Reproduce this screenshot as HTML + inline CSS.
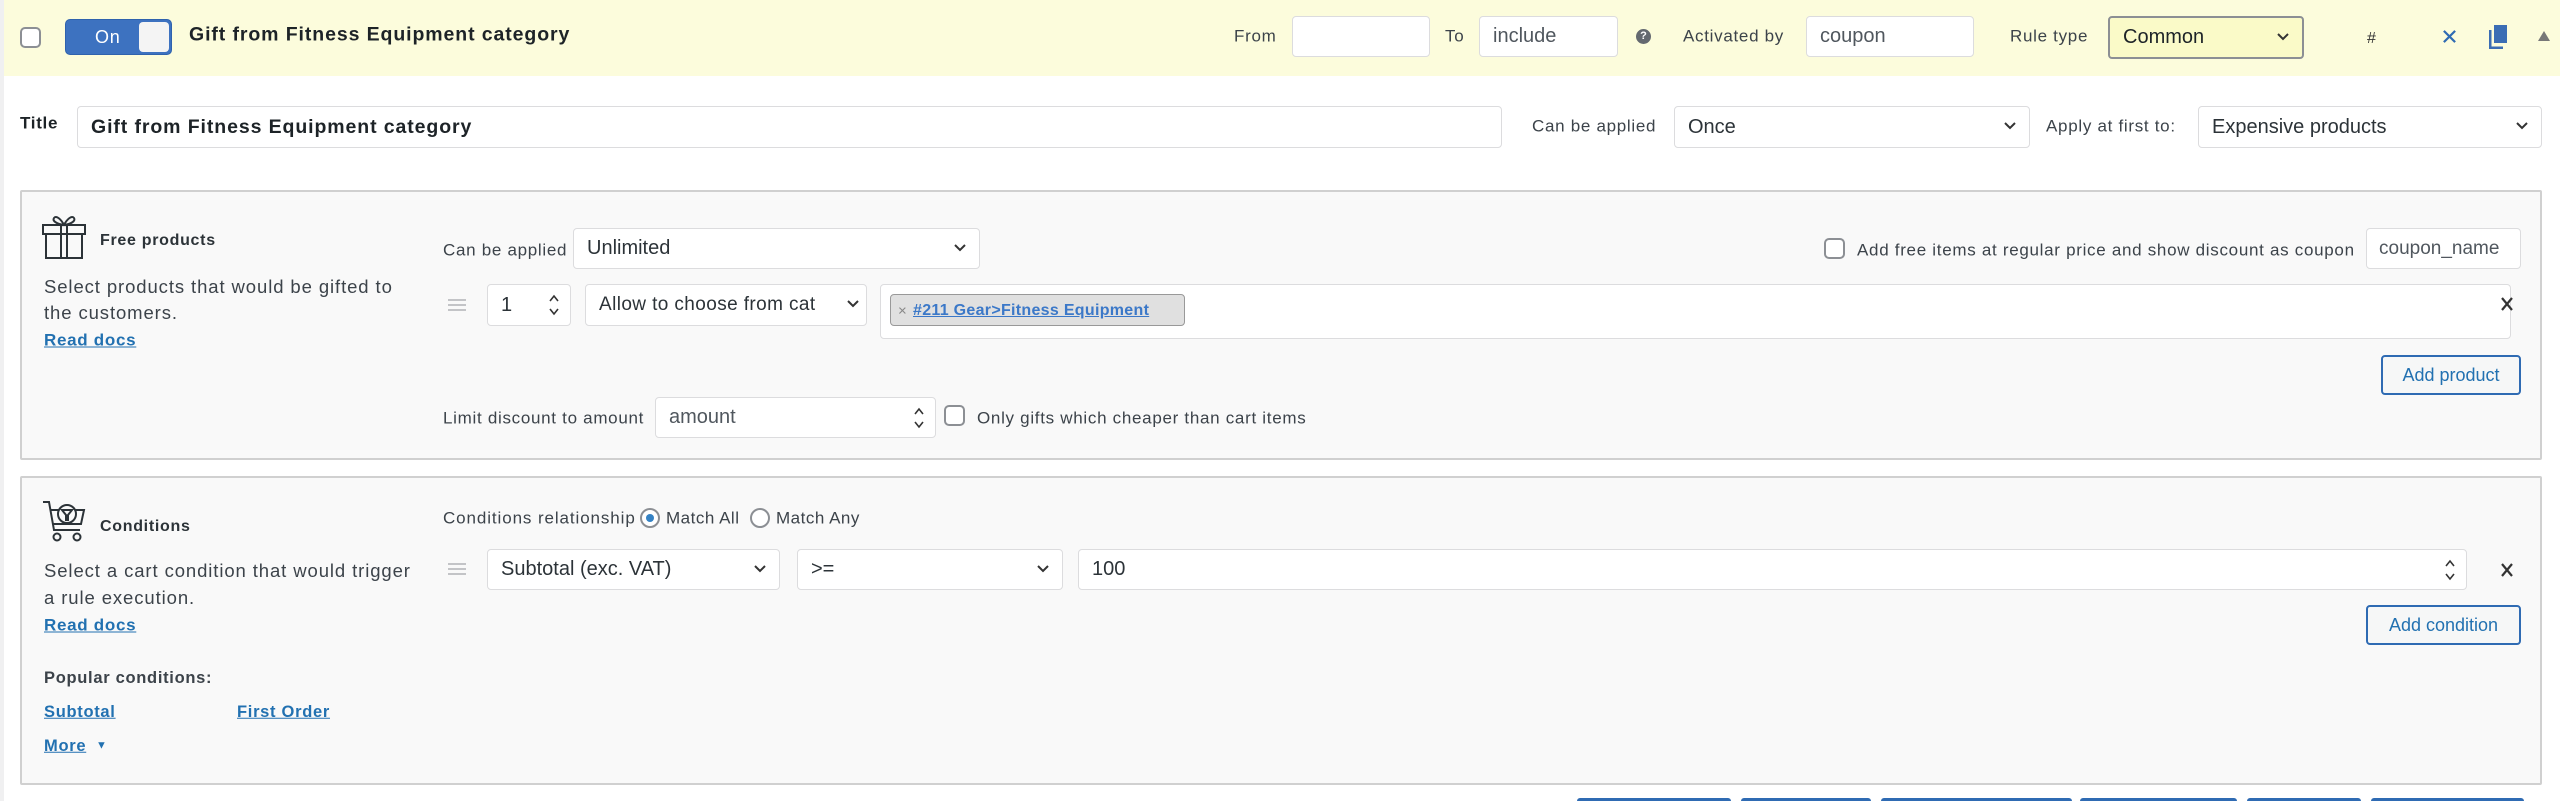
<!DOCTYPE html>
<html><head><meta charset="utf-8"><style>
*{margin:0;padding:0;box-sizing:border-box}
body{width:2560px;height:801px;overflow:hidden;background:#fff;font-family:"Liberation Sans",Arial,sans-serif;color:#3c434a;position:relative}
.a{position:absolute}
.t{position:absolute;white-space:nowrap;font-size:17px;color:#3c434a;transform:translateY(-50%);line-height:1;letter-spacing:0.7px}
.in{position:absolute;background:#fff;border:1px solid #dcdcde;border-radius:4px;display:flex;align-items:center;padding-left:13px;font-size:20px;color:#2c3338;white-space:nowrap;overflow:hidden}
.chev{position:absolute;right:12px;top:50%;margin-top:-6px;width:14px;height:10px}
.lnk{color:#2271b1;text-decoration:underline;font-weight:bold;font-size:17px}
.btn{position:absolute;border:2px solid #2f6bb3;border-radius:4px;background:#f6f7f7;color:#2271b1;font-size:18px;display:flex;align-items:center;justify-content:center}
.panel{position:absolute;left:20px;width:2522px;background:#f9f9f9;border:2px solid #d0d0d0;border-radius:2px}
.cb{position:absolute;width:21px;height:21px;border:2px solid #8c8f94;border-radius:5px;background:#fff}
.drag{position:absolute;width:18px;height:12px;border-top:2px solid #c3c4c7;border-bottom:2px solid #c3c4c7}
.drag:after{content:"";position:absolute;left:0;right:0;top:3px;border-top:2px solid #c3c4c7}
.spin{position:absolute;right:10px;top:50%;transform:translateY(-50%);width:12px;height:26px}
.desc{font-size:18.5px;letter-spacing:0.9px}
</style></head><body>
<div class="a" style="left:0;top:0;width:4px;height:801px;background:#f0f0f1"></div>
<!-- header -->
<div class="a" style="left:4px;top:0;width:2556px;height:76px;background:#fcfcdc"></div>
<div class="cb" style="left:20px;top:27px"></div>
<div class="a" style="left:65px;top:19px;width:107px;height:36px;background:#3d72c0;border-radius:5px;border:1px solid #2f62ad"></div>
<div class="t" style="left:95px;top:37px;color:#fff;font-size:18px">On</div>
<div class="a" style="left:139px;top:22px;width:30px;height:30px;background:#f4f4f4;border-radius:4px"></div>
<div class="t" style="left:189px;top:35px;font-size:19.5px;font-weight:bold;color:#1d2327;letter-spacing:0.9px">Gift from Fitness Equipment category</div>
<div class="t" style="left:1234px;top:36px">From</div>
<div class="in" style="left:1292px;top:16px;width:138px;height:41px"></div>
<div class="t" style="left:1445px;top:36px">To</div>
<div class="in" style="left:1479px;top:16px;width:139px;height:41px;color:#50575e">include</div>
<div class="a" style="left:1636px;top:29px;width:15px;height:15px;border-radius:50%;background:#646970;color:#fff;font-size:11px;font-weight:bold;text-align:center;line-height:15px">?</div>
<div class="t" style="left:1683px;top:36px">Activated by</div>
<div class="in" style="left:1806px;top:16px;width:168px;height:41px;color:#50575e">coupon</div>
<div class="t" style="left:2010px;top:36px">Rule type</div>
<div class="in" style="left:2108px;top:16px;width:196px;height:43px;background:#fafac8;border:2px solid #8c8f94;color:#1d2327">Common<svg class="chev" viewBox="0 0 14 10"><path d="M2 2l5 5 5-5" stroke="#333" stroke-width="2" fill="none"/></svg></div>
<div class="t" style="left:2367px;top:39px;font-size:16px;color:#333">#</div>
<svg class="a" style="left:2442px;top:29px" width="15" height="15" viewBox="0 0 16 16"><path d="M2 2L14 14M14 2L2 14" stroke="#2f6bb3" stroke-width="2.4"/></svg>
<svg class="a" style="left:2489px;top:25px" width="20" height="24" viewBox="0 0 20 24"><rect x="5" y="0" width="13" height="18" fill="#3b6db4"/><path d="M1 5v18h13" stroke="#3b6db4" stroke-width="3" fill="none"/></svg>
<svg class="a" style="left:2538px;top:31px" width="12" height="10" viewBox="0 0 12 10"><path d="M6 0L12 10H0z" fill="#777"/></svg>
<!-- title row -->
<div class="t" style="left:20px;top:123px;font-weight:bold;color:#1d2327">Title</div>
<div class="in" style="left:77px;top:106px;width:1425px;height:42px;font-weight:bold;font-size:19.5px;color:#1d2327;letter-spacing:0.9px">Gift from Fitness Equipment category</div>
<div class="t" style="left:1532px;top:126px">Can be applied</div>
<div class="in" style="left:1674px;top:106px;width:356px;height:42px">Once<svg class="chev" viewBox="0 0 14 10"><path d="M2 2l5 5 5-5" stroke="#333" stroke-width="2" fill="none"/></svg></div>
<div class="t" style="left:2046px;top:126px">Apply at first to:</div>
<div class="in" style="left:2198px;top:106px;width:344px;height:42px">Expensive products<svg class="chev" viewBox="0 0 14 10"><path d="M2 2l5 5 5-5" stroke="#333" stroke-width="2" fill="none"/></svg></div>
<!-- free products panel -->
<div class="panel" style="top:190px;height:270px"></div>
<svg class="a" style="left:42px;top:213px" width="44" height="46" viewBox="0 0 44 46"><g stroke="#2c3338" stroke-width="2" fill="none"><rect x="1" y="12" width="42" height="9"/><rect x="4" y="21" width="36" height="24"/><path d="M19 12v33M25 12v33"/><path d="M22 12c-3-6-8-10-10-7s3 6 10 7zM22 12c3-6 8-10 10-7s-3 6-10 7z"/></g></svg>
<div class="t" style="left:100px;top:241px;font-weight:bold;font-size:16px;color:#2c3338">Free products</div>
<div class="t desc" style="left:44px;top:287px">Select products that would be gifted to</div>
<div class="t desc" style="left:44px;top:313px">the customers.</div>
<div class="t lnk" style="left:44px;top:340px">Read docs</div>
<div class="t" style="left:443px;top:250px">Can be applied</div>
<div class="in" style="left:573px;top:228px;width:407px;height:41px">Unlimited<svg class="chev" viewBox="0 0 14 10"><path d="M2 2l5 5 5-5" stroke="#333" stroke-width="2" fill="none"/></svg></div>
<div class="cb" style="left:1824px;top:238px"></div>
<div class="t" style="left:1857px;top:250px">Add free items at regular price and show discount as coupon</div>
<div class="in" style="left:2366px;top:228px;width:155px;height:41px;color:#50575e;font-size:19px;padding-left:12px">coupon_name</div>
<div class="drag" style="left:448px;top:299px"></div>
<div class="in" style="left:487px;top:284px;width:84px;height:42px">1<svg class="spin" viewBox="0 0 12 26"><path d="M2 9l4-5 4 5M2 17l4 5 4-5" stroke="#333" stroke-width="1.6" fill="none"/></svg></div>
<div class="in" style="left:585px;top:284px;width:282px;height:42px;font-size:19px;letter-spacing:0.4px">Allow to choose from cat<svg class="chev" style="right:6px" viewBox="0 0 14 10"><path d="M2 2l5 5 5-5" stroke="#333" stroke-width="2" fill="none"/></svg></div>
<div class="in" style="left:880px;top:284px;width:1631px;height:55px"></div>
<div class="a" style="left:890px;top:294px;width:295px;height:32px;background:#e0e0e0;border:1px solid #999;border-radius:4px"></div>
<div class="t" style="left:898px;top:311px;color:#888;font-size:15px">×</div>
<div class="t lnk" style="left:913px;top:311px;font-size:16px;color:#3b78c8;letter-spacing:0.3px">#211 Gear&gt;Fitness Equipment</div>
<svg class="a" style="left:2500px;top:296px" width="14" height="16" viewBox="0 0 14 16"><path d="M2 2L12 14M12 2L2 14" stroke="#333" stroke-width="2.2"/></svg>
<div class="btn" style="left:2381px;top:355px;width:140px;height:40px">Add product</div>
<div class="t" style="left:443px;top:418px">Limit discount to amount</div>
<div class="in" style="left:655px;top:397px;width:281px;height:41px;color:#50575e">amount<svg class="spin" viewBox="0 0 12 26"><path d="M2 9l4-5 4 5M2 17l4 5 4-5" stroke="#333" stroke-width="1.6" fill="none"/></svg></div>
<div class="cb" style="left:944px;top:405px"></div>
<div class="t" style="left:977px;top:418px">Only gifts which cheaper than cart items</div>
<!-- conditions panel -->
<div class="panel" style="top:476px;height:309px"></div>
<svg class="a" style="left:42px;top:500px" width="46" height="42" viewBox="0 0 46 42"><g stroke="#2c3338" stroke-width="2" fill="none"><path d="M1 2h6l5 28h26"/><path d="M9 10h33l-3 14H11"/><circle cx="25" cy="14" r="9" fill="#f9f9f9"/><path d="M20 10h10l-4 5v5h-2v-5z"/><circle cx="15" cy="37" r="3.5"/><circle cx="35" cy="37" r="3.5"/></g></svg>
<div class="t" style="left:100px;top:527px;font-weight:bold;font-size:16px;color:#2c3338">Conditions</div>
<div class="t" style="left:443px;top:518px;font-size:17px;letter-spacing:0.9px">Conditions relationship</div>
<div class="a" style="left:640px;top:508px;width:20px;height:20px;border-radius:50%;border:2px solid #8c8f94;background:#fff"><div class="a" style="left:4px;top:4px;width:8px;height:8px;border-radius:50%;background:#3582c4"></div></div>
<div class="t" style="left:666px;top:518px;font-size:17px;letter-spacing:0.5px">Match All</div>
<div class="a" style="left:750px;top:508px;width:20px;height:20px;border-radius:50%;border:2px solid #8c8f94;background:#fff"></div>
<div class="t" style="left:776px;top:518px;font-size:17px;letter-spacing:0.5px">Match Any</div>
<div class="t desc" style="left:44px;top:571px">Select a cart condition that would trigger</div>
<div class="t desc" style="left:44px;top:598px">a rule execution.</div>
<div class="t lnk" style="left:44px;top:625px">Read docs</div>
<div class="t" style="left:44px;top:678px;font-weight:bold;font-size:16.5px">Popular conditions:</div>
<div class="t lnk" style="left:44px;top:712px;font-size:16.5px">Subtotal</div>
<div class="t lnk" style="left:237px;top:712px;font-size:16.5px">First Order</div>
<div class="t lnk" style="left:44px;top:746px;font-size:16.5px">More</div>
<div class="t" style="left:96px;top:746px;font-size:11px;color:#2271b1">▼</div>
<div class="drag" style="left:448px;top:563px"></div>
<div class="in" style="left:487px;top:549px;width:293px;height:41px">Subtotal (exc. VAT)<svg class="chev" viewBox="0 0 14 10"><path d="M2 2l5 5 5-5" stroke="#333" stroke-width="2" fill="none"/></svg></div>
<div class="in" style="left:797px;top:549px;width:266px;height:41px">&gt;=<svg class="chev" viewBox="0 0 14 10"><path d="M2 2l5 5 5-5" stroke="#333" stroke-width="2" fill="none"/></svg></div>
<div class="in" style="left:1078px;top:549px;width:1389px;height:41px">100<svg class="spin" viewBox="0 0 12 26"><path d="M2 9l4-5 4 5M2 17l4 5 4-5" stroke="#333" stroke-width="1.6" fill="none"/></svg></div>
<svg class="a" style="left:2500px;top:562px" width="14" height="16" viewBox="0 0 14 16"><path d="M2 2L12 14M12 2L2 14" stroke="#333" stroke-width="2.2"/></svg>
<div class="btn" style="left:2366px;top:605px;width:155px;height:40px">Add condition</div>
<!-- bottom buttons -->
<div class="a" style="left:1577px;top:798px;width:154px;height:3px;background:#2f6bb3;border-radius:3px 3px 0 0"></div>
<div class="a" style="left:1741px;top:798px;width:130px;height:3px;background:#2f6bb3;border-radius:3px 3px 0 0"></div>
<div class="a" style="left:1881px;top:798px;width:191px;height:3px;background:#2f6bb3;border-radius:3px 3px 0 0"></div>
<div class="a" style="left:2080px;top:798px;width:157px;height:3px;background:#2f6bb3;border-radius:3px 3px 0 0"></div>
<div class="a" style="left:2247px;top:798px;width:114px;height:3px;background:#2f6bb3;border-radius:3px 3px 0 0"></div>
<div class="a" style="left:2371px;top:798px;width:153px;height:3px;background:#2f6bb3;border-radius:3px 3px 0 0"></div>
</body></html>
